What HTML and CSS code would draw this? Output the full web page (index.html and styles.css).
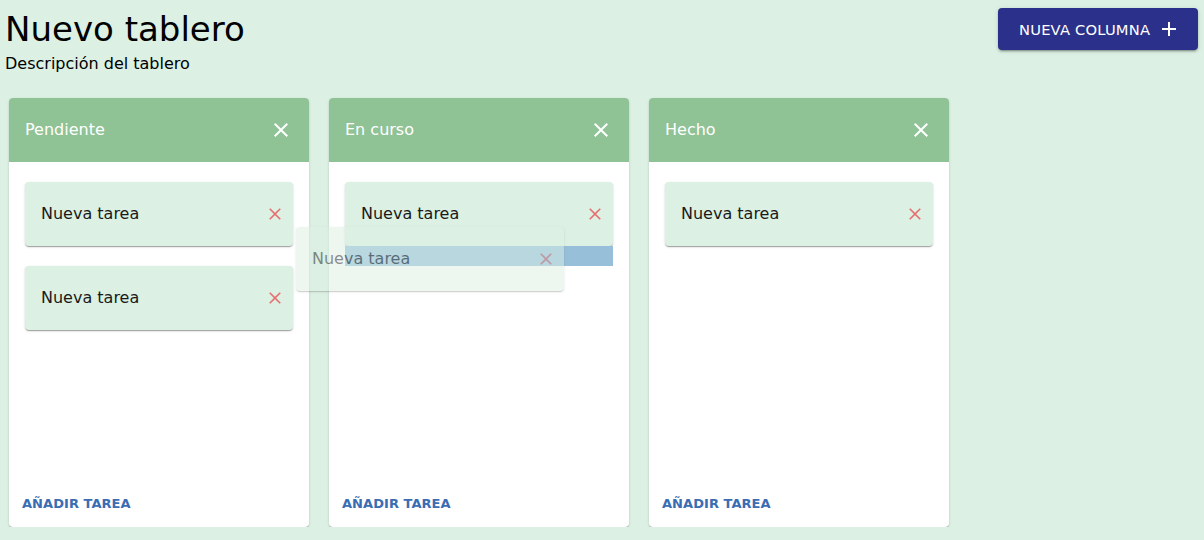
FILE: index.html
```html
<!DOCTYPE html>
<html lang="es">
<head>
<meta charset="utf-8">
<title>Nuevo tablero</title>
<link rel="stylesheet" href="styles.css">
</head>
<body>
<div class="page">
  <header class="top">
    <div class="titles">
      <h1 class="title">Nuevo tablero</h1>
      <p class="desc">Descripción del tablero</p>
    </div>
    <button class="add-col"><span>NUEVA COLUMNA</span>
      <svg class="plus" viewBox="0 0 24 24" width="24" height="24"><path d="M19 13h-6v6h-2v-6H5v-2h6V5h2v6h6v2z"/></svg>
    </button>
  </header>

  <main class="board">
    <section class="column">
      <div class="col-head">
        <span class="col-title">Pendiente</span>
        <svg class="close" viewBox="0 0 24 24" width="24" height="24"><path d="M19 6.41L17.59 5 12 10.59 6.41 5 5 6.41 10.59 12 5 17.59 6.41 19 12 13.41 17.59 19 19 17.59 13.41 12z"/></svg>
      </div>
      <div class="col-body">
        <div class="task"><span>Nueva tarea</span><svg class="del" viewBox="0 0 24 24" width="20" height="20"><path d="M19 6.41L17.59 5 12 10.59 6.41 5 5 6.41 10.59 12 5 17.59 6.41 19 12 13.41 17.59 19 19 17.59 13.41 12z"/></svg></div>
        <div class="task"><span>Nueva tarea</span><svg class="del" viewBox="0 0 24 24" width="20" height="20"><path d="M19 6.41L17.59 5 12 10.59 6.41 5 5 6.41 10.59 12 5 17.59 6.41 19 12 13.41 17.59 19 19 17.59 13.41 12z"/></svg></div>
      </div>
      <div class="col-foot"><button class="add-task">AÑADIR TAREA</button></div>
    </section>

    <section class="column">
      <div class="col-head">
        <span class="col-title">En curso</span>
        <svg class="close" viewBox="0 0 24 24" width="24" height="24"><path d="M19 6.41L17.59 5 12 10.59 6.41 5 5 6.41 10.59 12 5 17.59 6.41 19 12 13.41 17.59 19 19 17.59 13.41 12z"/></svg>
      </div>
      <div class="col-body">
        <div class="drop-group">
          <div class="task"><span>Nueva tarea</span><svg class="del" viewBox="0 0 24 24" width="20" height="20"><path d="M19 6.41L17.59 5 12 10.59 6.41 5 5 6.41 10.59 12 5 17.59 6.41 19 12 13.41 17.59 19 19 17.59 13.41 12z"/></svg></div>
          <div class="placeholder"></div>
        </div>
      </div>
      <div class="col-foot"><button class="add-task">AÑADIR TAREA</button></div>
    </section>

    <section class="column">
      <div class="col-head">
        <span class="col-title">Hecho</span>
        <svg class="close" viewBox="0 0 24 24" width="24" height="24"><path d="M19 6.41L17.59 5 12 10.59 6.41 5 5 6.41 10.59 12 5 17.59 6.41 19 12 13.41 17.59 19 19 17.59 13.41 12z"/></svg>
      </div>
      <div class="col-body">
        <div class="task"><span>Nueva tarea</span><svg class="del" viewBox="0 0 24 24" width="20" height="20"><path d="M19 6.41L17.59 5 12 10.59 6.41 5 5 6.41 10.59 12 5 17.59 6.41 19 12 13.41 17.59 19 19 17.59 13.41 12z"/></svg></div>
      </div>
      <div class="col-foot"><button class="add-task">AÑADIR TAREA</button></div>
    </section>

    <div class="task ghost"><span>Nueva tarea</span><svg class="del" viewBox="0 0 24 24" width="20" height="20"><path d="M19 6.41L17.59 5 12 10.59 6.41 5 5 6.41 10.59 12 5 17.59 6.41 19 12 13.41 17.59 19 19 17.59 13.41 12z"/></svg></div>
  </main>
</div>
</body>
</html>
```

FILE: styles.css
```css
* { box-sizing: border-box; }

html, body {
  margin: 0;
  padding: 0;
  background: #dcf0e3;
  font-family: "DejaVu Sans", Verdana, sans-serif;
  color: #000;
  overflow: hidden;
}

.page {
  padding: 0 6px 0 9px;
  position: relative;
}

.top {
  display: flex;
  justify-content: space-between;
  align-items: flex-start;
  margin-left: -4px;
}

.title {
  margin: 0;
  padding-top: 9px;
  font-size: 34px;
  font-weight: 400;
  line-height: 1.2;
  letter-spacing: 0;
}

.desc {
  margin: 2px 0 0;
  font-size: 16px;
  line-height: 1.5;
}

.add-col {
  margin-top: 8px;
  height: 42px;
  width: 200px;
  display: flex;
  align-items: center;
  justify-content: flex-start;
  gap: 7px;
  border: none;
  border-radius: 4px;
  background: #2b318a;
  color: #fff;
  font-family: "DejaVu Sans", Verdana, sans-serif;
  font-size: 14.7px;
  letter-spacing: 0.2px;
  box-shadow: 0 3px 1px -2px rgba(0,0,0,.2), 0 2px 2px 0 rgba(0,0,0,.14), 0 1px 5px 0 rgba(0,0,0,.12);
  padding: 0 12px 0 21px;
}

.plus { fill: #fff; flex: none; }

.board {
  display: flex;
  gap: 20px;
  margin-top: 22px;
  position: relative;
}

.column {
  width: 300px;
  height: 429px;
  background: #fff;
  border-radius: 4px;
  overflow: hidden;
  display: flex;
  flex-direction: column;
  box-shadow: 0 2px 1px -1px rgba(0,0,0,.2), 0 1px 1px 0 rgba(0,0,0,.14), 0 1px 3px 0 rgba(0,0,0,.12);
}

.col-head {
  height: 64px;
  background: #8fc295;
  color: #fff;
  display: flex;
  align-items: center;
  justify-content: space-between;
  padding: 0 16px;
  font-size: 16px;
  flex: none;
}

.close { fill: #fff; }

.col-body {
  flex: 1;
  padding: 20px 16px;
  display: flex;
  flex-direction: column;
  gap: 20px;
}

.task {
  height: 64px;
  background: #dcf0e3;
  border-radius: 4px;
  display: flex;
  align-items: center;
  justify-content: space-between;
  padding: 0 8px 0 16px;
  font-size: 16px;
  color: #1a1a1a;
  box-shadow: 0 2px 1px -1px rgba(0,0,0,.2), 0 1px 1px 0 rgba(0,0,0,.14), 0 1px 3px 0 rgba(0,0,0,.12);
}

.del { fill: #e57373; }

.placeholder {
  height: 20px;
  background: #97bfd9;
}

.col-foot {
  flex: none;
  height: 46px;
  padding: 0 13px;
  display: flex;
  align-items: center;
}

.add-task {
  border: none;
  background: none;
  padding: 0;
  font-family: "DejaVu Sans", Verdana, sans-serif;
  font-weight: 700;
  font-size: 13px;
  letter-spacing: 0.05px;
  color: #3a6db3;
}

.ghost {
  position: absolute;
  left: 287px;
  top: 129px;
  width: 268px;
  opacity: 0.5;
}
```
